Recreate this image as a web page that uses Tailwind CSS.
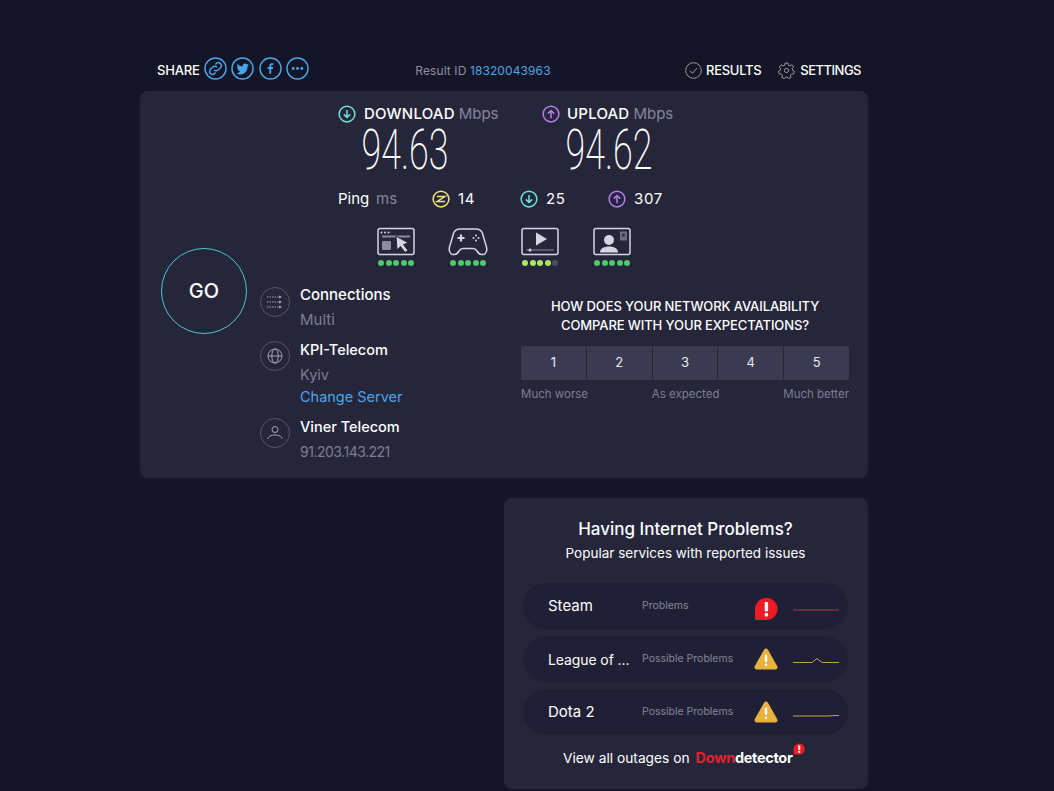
<!DOCTYPE html>
<html lang="en">
<head>
    <meta charset="UTF-8">
    <title>Speedtest Result</title>
    <script src="https://cdn.jsdelivr.net/npm/@tailwindcss/browser@4"></script>
</head>
<body class="bg-[#141526] h-[791px] overflow-hidden font-['Inter',sans-serif] text-white">
    <div class="w-[728px] ml-[140px] pt-[50px]">
        <!-- top bar -->
        <div class="h-[41px] flex items-center justify-between pl-[17px] pr-[7px]">
            <div class="flex items-center w-[208px]">
                <span class="text-[13px] font-medium tracking-[-0.2px] mr-[4px]">SHARE</span>
                <div class="flex gap-[4.500px] text-[#4aa5e8] -mt-[5px]">
                    <svg class="w-[23px] h-[23px]" viewBox="0 0 24 24" fill="none" stroke="currentColor" stroke-width="1.500"><circle cx="12" cy="12" r="11"/><path d="M10.500 13.500a3 3 0 0 0 4.300 0l2.400-2.400a3 3 0 0 0-4.300-4.300l-1 1M13.500 10.500a3 3 0 0 0-4.300 0l-2.400 2.400a3 3 0 0 0 4.300 4.300l1-1"/></svg>
                    <svg class="w-[23px] h-[23px]" viewBox="0 0 24 24" fill="none" stroke="currentColor" stroke-width="1.500"><circle cx="12" cy="12" r="11"/><path fill="currentColor" stroke="none" d="M18.500 8a5 5 0 0 1-1.500.4 2.600 2.600 0 0 0 1.100-1.400 5 5 0 0 1-1.600.6 2.600 2.600 0 0 0-4.400 2.300A7.300 7.300 0 0 1 6.700 7.300a2.600 2.600 0 0 0 .8 3.400 2.600 2.600 0 0 1-1.200-.3c0 1.300.9 2.400 2.100 2.600a2.600 2.600 0 0 1-1.200 0c.3 1 1.300 1.800 2.400 1.800A5.200 5.200 0 0 1 5.800 16.900a7.300 7.300 0 0 0 11.300-6.500A5 5 0 0 0 18.500 8z"/></svg>
                    <svg class="w-[23px] h-[23px]" viewBox="0 0 24 24" fill="none" stroke="currentColor" stroke-width="1.500"><circle cx="12" cy="12" r="11"/><path fill="currentColor" stroke="none" d="M12.800 17.500v-5h1.700l.3-2h-2V9.300c0-.6.200-1 1-1h1V6.600c-.2 0-.8-.1-1.500-.1-1.500 0-2.500.9-2.500 2.600v1.400H9v2h1.800v5z"/></svg>
                    <svg class="w-[23px] h-[23px]" viewBox="0 0 24 24" fill="none" stroke="currentColor" stroke-width="1.500"><circle cx="12" cy="12" r="11"/><g fill="currentColor" stroke="none"><circle cx="7.500" cy="12" r="1.500"/><circle cx="12" cy="12" r="1.500"/><circle cx="16.500" cy="12" r="1.500"/></g></svg>
                </div>
            </div>
            <div class="text-[12px] text-[#8d8ea3] tracking-[0.1px]">Result ID <span class="text-[#4aa5e8]">18320043963</span></div>
            <div class="w-[260px] flex items-center justify-end">
                <svg class="w-[17px] h-[17px] mr-[4px] text-[#a3a4b4]" viewBox="0 0 24 24" fill="none" stroke="currentColor" stroke-width="1.300"><circle cx="12" cy="12" r="11"/><path d="M7 12.500l3.500 3.500 6.500-7.500"/></svg>
                <span class="text-[13px] font-medium tracking-[-0.3px]">RESULTS</span>
                <svg class="w-[17px] h-[17px] ml-[17px] mr-[5px] text-[#a3a4b4]" viewBox="0 0 24 24" fill="none" stroke="currentColor" stroke-width="1.300"><circle cx="12" cy="12" r="3"/><path d="M10 1.500h4l.6 3 2.300 1 2.700-1.600 2.500 3.100-2 2.200.4 2.500 2.500 1.300-.9 3.800-3 .1-1.500 2 .8 3-3.600 1.700-1.800-2.400h-2.200l-1.800 2.400-3.600-1.700.8-3-1.500-2-3-.1-.9-3.800 2.500-1.300.4-2.500-2-2.200L4.400 3.900l2.700 1.600 2.300-1z"/></svg>
                <span class="text-[13px] font-medium tracking-[-0.5px]">SETTINGS</span>
            </div>
        </div>

        <!-- result card -->
        <div class="h-[387px] bg-[#25263a] rounded-[8px] pl-[21px] flex">
            <div class="w-[86px] mr-[13px] pt-[157px] shrink-0">
                <div class="w-[86px] h-[86px] rounded-full border border-[#4fc5d5] flex items-center justify-center text-[20px] font-medium">GO</div>
            </div>
            <div class="flex-1">
                <!-- speeds -->
                <div class="flex ml-[78px] pt-[14px]">
                    <div class="w-[204px]">
                        <div class="flex items-center h-[18px]">
                            <svg class="w-[18px] h-[18px] mr-[8px] text-[#6ee2d8]" viewBox="0 0 24 24" fill="none" stroke="currentColor" stroke-width="2"><circle cx="12" cy="12" r="10.500"/><path d="M12 6.500v10M7.800 12.500l4.200 4.200 4.200-4.200"/></svg>
                            <span class="text-[15px] font-medium tracking-[0.2px]">DOWNLOAD</span>
                            <span class="text-[15px] text-[#85869b] ml-[4px]">Mbps</span>
                        </div>
                        <div class="h-[51px] w-[133px] flex justify-center">
                            <span class="font-['Roboto',sans-serif] font-extralight text-[56px] leading-[54px] scale-x-[0.64] origin-center">94.63</span>
                        </div>
                    </div>
                    <div>
                        <div class="flex items-center h-[18px]">
                            <svg class="w-[18px] h-[18px] mr-[7px] text-[#b67df0]" viewBox="0 0 24 24" fill="none" stroke="currentColor" stroke-width="2"><circle cx="12" cy="12" r="10.500"/><path d="M12 17.500v-10M7.800 11.500l4.200-4.200 4.200 4.200"/></svg>
                            <span class="text-[15px] font-medium tracking-[0.2px]">UPLOAD</span>
                            <span class="text-[15px] text-[#85869b] ml-[4px]">Mbps</span>
                        </div>
                        <div class="h-[51px] w-[133px] flex justify-center">
                            <span class="font-['Roboto',sans-serif] font-extralight text-[56px] leading-[54px] scale-x-[0.64] origin-center">94.62</span>
                        </div>
                    </div>
                </div>
                <!-- ping -->
                <div class="flex items-center ml-[78px] mt-[15px] h-[20px] text-[15px]">
                    <span class="w-[38px]">Ping</span>
                    <span class="w-[56px] text-[#85869b]">ms</span>
                    <svg class="w-[18px] h-[18px] text-[#f3e67b]" viewBox="0 0 24 24" fill="none" stroke="currentColor" stroke-width="2"><circle cx="12" cy="12" r="10.500"/><path d="M6.500 8.800h10.500L7 15.200h10.500"/></svg>
                    <span class="w-[62px] ml-[8px] tracking-[0.7px]">14</span>
                    <svg class="w-[18px] h-[18px] text-[#6ee2d8]" viewBox="0 0 24 24" fill="none" stroke="currentColor" stroke-width="2"><circle cx="12" cy="12" r="10.500"/><path d="M12 6.500v10M7.800 12.500l4.200 4.200 4.200-4.200"/></svg>
                    <span class="w-[62px] ml-[8px] tracking-[0.7px]">25</span>
                    <svg class="w-[18px] h-[18px] text-[#b67df0]" viewBox="0 0 24 24" fill="none" stroke="currentColor" stroke-width="2"><circle cx="12" cy="12" r="10.500"/><path d="M12 17.500v-10M7.800 11.500l4.200-4.200 4.200 4.200"/></svg>
                    <span class="ml-[8px] tracking-[0.7px]">307</span>
                </div>
                <!-- quality icons -->
                <div class="flex ml-[117px] mt-[18px] gap-[34px] text-[#d5d5e3]">
                    <div class="w-[38px] flex flex-col items-center">
                        <svg class="w-[38px] h-[30px]" viewBox="0 0 38 30" fill="none" stroke="currentColor" stroke-width="1.500"><rect x="1" y="1.500" width="36" height="26" rx="2"/><path d="M5 9.500h28" stroke-width="2" stroke="#8b8c9e"/><circle cx="4.500" cy="5.500" r="1" fill="currentColor" stroke="none"/><circle cx="8" cy="5.500" r="1" fill="currentColor" stroke="none"/><circle cx="11.500" cy="5.500" r="1" fill="currentColor" stroke="none"/><rect x="5" y="14" width="9" height="9" rx="1" fill="#8b8c9e" stroke="none"/><path d="M19 9l12.500 7-5 1.500 4.500 6-3 2-4.500-6-3.500 3.500z" fill="currentColor" stroke="#25263a" stroke-width="1"/></svg>
                        <div class="flex gap-[1.500px] mt-[3px]"><i class="w-[6px] h-[6px] rounded-full bg-[#4ec96b]"></i><i class="w-[6px] h-[6px] rounded-full bg-[#4ec96b]"></i><i class="w-[6px] h-[6px] rounded-full bg-[#4ec96b]"></i><i class="w-[6px] h-[6px] rounded-full bg-[#4ec96b]"></i><i class="w-[6px] h-[6px] rounded-full bg-[#4ec96b]"></i></div>
                    </div>
                    <div class="w-[38px] flex flex-col items-center">
                        <svg class="w-[40px] h-[30px]" viewBox="0 0 40 30" fill="none" stroke="currentColor" stroke-width="1.500"><path d="M12 2h16c3.500 0 5.500 1.500 6.500 4.500L38.500 20c1 4-1 7.500-3.500 7.500h-1.500c-2 0-3-1-4.500-3.500-1-1.500-2-2.500-4-2.500H15c-2 0-3 1-4 2.500-1.500 2.500-2.500 3.500-4.500 3.500H5c-2.500 0-4.500-3.500-3.500-7.500L5.500 6.500C6.500 3.500 8.500 2 12 2z"/><path d="M9.500 11h7M13 7.500v7" stroke-width="2.200"/><g fill="currentColor" stroke="none"><circle cx="28" cy="8.500" r="1"/><circle cx="28" cy="13.500" r="1"/><circle cx="25.500" cy="11" r="1"/><circle cx="30.500" cy="11" r="1"/></g></svg>
                        <div class="flex gap-[1.500px] mt-[3px]"><i class="w-[6px] h-[6px] rounded-full bg-[#4ec96b]"></i><i class="w-[6px] h-[6px] rounded-full bg-[#4ec96b]"></i><i class="w-[6px] h-[6px] rounded-full bg-[#4ec96b]"></i><i class="w-[6px] h-[6px] rounded-full bg-[#4ec96b]"></i><i class="w-[6px] h-[6px] rounded-full bg-[#4ec96b]"></i></div>
                    </div>
                    <div class="w-[38px] flex flex-col items-center">
                        <svg class="w-[38px] h-[30px]" viewBox="0 0 38 30" fill="none" stroke="currentColor" stroke-width="1.500"><rect x="1" y="1.500" width="36" height="26" rx="2"/><path d="M15 5.500l11 6.500-11 6.500z" fill="currentColor" stroke="none"/><path d="M5 23h28" stroke-width="1" stroke="#8b8c9e"/><circle cx="9" cy="23" r="1.500" fill="currentColor" stroke="none"/></svg>
                        <div class="flex gap-[1.500px] mt-[3px]"><i class="w-[6px] h-[6px] rounded-full bg-[#a5ea63]"></i><i class="w-[6px] h-[6px] rounded-full bg-[#a5ea63]"></i><i class="w-[6px] h-[6px] rounded-full bg-[#a5ea63]"></i><i class="w-[6px] h-[6px] rounded-full bg-[#a5ea63]"></i><i class="w-[6px] h-[6px] rounded-full bg-[#4c4d60]"></i></div>
                    </div>
                    <div class="w-[38px] flex flex-col items-center">
                        <svg class="w-[38px] h-[30px]" viewBox="0 0 38 30" fill="none" stroke="currentColor" stroke-width="1.500"><rect x="1" y="1.500" width="36" height="26" rx="2"/><circle cx="16" cy="13" r="5" fill="currentColor" stroke="none"/><path d="M7 25.500c0-4 4-6 9-6s9 2 9 6z" fill="currentColor" stroke="none"/><rect x="27" y="4.500" width="7" height="9" fill="#6a6b7d" stroke="none"/><circle cx="30.500" cy="8" r="1.500" fill="#25263a" stroke="none"/></svg>
                        <div class="flex gap-[1.500px] mt-[3px]"><i class="w-[6px] h-[6px] rounded-full bg-[#4ec96b]"></i><i class="w-[6px] h-[6px] rounded-full bg-[#4ec96b]"></i><i class="w-[6px] h-[6px] rounded-full bg-[#4ec96b]"></i><i class="w-[6px] h-[6px] rounded-full bg-[#4ec96b]"></i><i class="w-[6px] h-[6px] rounded-full bg-[#4ec96b]"></i></div>
                    </div>
                </div>
                <!-- details + survey -->
                <div class="flex mt-[19px]">
                    <div class="w-[261px] shrink-0">
                        <div class="flex gap-[10px] h-[55px]">
                            <div class="w-[30px] h-[30px] mt-[2px] rounded-full border border-[#55566a] flex items-center justify-center text-[#a3a4b4]">
                                <svg class="w-[18px] h-[18px]" viewBox="0 0 18 18" fill="none" stroke="currentColor" stroke-width="1" stroke-dasharray="1.500 1"><path d="M1 4h14M1 9h14M1 14h14"/><path d="M13 2.500L16 4l-3 1.500zM13 7.500L16 9l-3 1.500zM13 12.500L16 14l-3 1.500z" fill="currentColor" stroke="none"/></svg>
                            </div>
                            <div>
                                <div class="text-[15px] leading-[20px] font-medium">Connections</div>
                                <div class="text-[15px] leading-[20px] mt-[5px] text-[#7d7e93]">Multi</div>
                            </div>
                        </div>
                        <div class="flex gap-[10px] h-[77px]">
                            <div class="w-[30px] h-[30px] mt-[1px] rounded-full border border-[#55566a] flex items-center justify-center text-[#a3a4b4]">
                                <svg class="w-[16px] h-[16px]" viewBox="0 0 16 16" fill="none" stroke="currentColor" stroke-width="1"><circle cx="8" cy="8" r="7"/><ellipse cx="8" cy="8" rx="3.200" ry="7"/><path d="M1 8h14"/></svg>
                            </div>
                            <div>
                                <div class="text-[14.500px] leading-[20px] font-medium">KPI-Telecom</div>
                                <div class="text-[14.500px] leading-[20px] mt-[5px] text-[#7d7e93]">Kyiv</div>
                                <div class="text-[14.500px] leading-[20px] mt-[2px] text-[#4aa5e8]">Change Server</div>
                            </div>
                        </div>
                        <div class="flex gap-[10px]">
                            <div class="w-[30px] h-[30px] mt-[1px] rounded-full border border-[#55566a] flex items-center justify-center text-[#a3a4b4]">
                                <svg class="w-[16px] h-[16px]" viewBox="0 0 16 16" fill="none" stroke="currentColor" stroke-width="1"><circle cx="8" cy="4.500" r="3"/><path d="M1 14c0-2.500 3-4 7-4s7 1.500 7 4"/></svg>
                            </div>
                            <div>
                                <div class="text-[14.500px] leading-[20px] font-medium">Viner Telecom</div>
                                <div class="text-[14px] leading-[20px] mt-[5px] text-[#7d7e93] tracking-[-0.5px]">91.203.143.221</div>
                            </div>
                        </div>
                    </div>
                    <div class="w-[328px] pt-[12px]">
                        <div class="text-center text-[13px] leading-[19px] font-medium tracking-[-0.1px]">HOW DOES YOUR NETWORK AVAILABILITY<br>COMPARE WITH YOUR EXPECTATIONS?</div>
                        <div class="flex gap-[1px] mt-[11px] h-[34px] rounded-[2px] overflow-hidden text-[13px] text-[#e8e8f0]">
                            <div class="flex-1 bg-[#3a3b50] flex items-center justify-center">1</div>
                            <div class="flex-1 bg-[#3a3b50] flex items-center justify-center">2</div>
                            <div class="flex-1 bg-[#3a3b50] flex items-center justify-center">3</div>
                            <div class="flex-1 bg-[#3a3b50] flex items-center justify-center">4</div>
                            <div class="flex-1 bg-[#3a3b50] flex items-center justify-center">5</div>
                        </div>
                        <div class="flex justify-between mt-[6px] text-[11.500px] leading-[16px] text-[#7d7e93]">
                            <span>Much worse</span><span>As expected</span><span>Much better</span>
                        </div>
                    </div>
                </div>
            </div>
        </div>

        <!-- problems card -->
        <div class="w-[364px] h-[291px] ml-auto mt-[20px] bg-[#25263a] rounded-[8px] pl-[19px] pr-[20px] pt-[21px]">
            <div class="text-center text-[17px] leading-[21px] font-medium">Having Internet Problems?</div>
            <div class="text-center text-[13.500px] leading-[20px] mt-[3px]">Popular services with reported issues</div>
            <div class="flex flex-col gap-[7px] mt-[20px]">
                <div class="h-[46px] rounded-[23px] bg-[#1f2035] flex items-center pl-[25px]">
                    <span class="w-[94px] text-[15px] pt-[1px]">Steam</span>
                    <span class="w-[112px] text-[10.500px] text-[#85869b]">Problems</span>
                    <svg class="w-[24px] h-[24px] mt-[5px]" viewBox="0 0 24 24"><path d="M12.500 1a11 11 0 0 1 0 22L1 23V12.500A11.500 11.500 0 0 1 12.500 1z" fill="#ee1b24"/><rect x="10.700" y="5" width="3.400" height="9.500" rx="1" fill="#fff"/><rect x="10.700" y="16" width="3.400" height="3.400" rx="1" fill="#fff"/></svg>
                    <svg class="w-[46px] h-[10px] ml-[15px]" viewBox="0 0 46 10" fill="none" stroke="#a83a52" stroke-width="1"><path d="M0 9h46"/></svg>
                </div>
                <div class="h-[46px] rounded-[23px] bg-[#1f2035] flex items-center pl-[25px]">
                    <span class="w-[94px] text-[14px] tracking-[-0.1px]">League of ...</span>
                    <span class="w-[112px] text-[10.500px] text-[#85869b]">Possible Problems</span>
                    <svg class="w-[24px] h-[24px]" viewBox="0 0 24 24"><path d="M12 1.500c.8 0 1.500.4 2 1.200l9.300 16.500c.7 1.400-.1 3.300-1.900 3.300H2.600c-1.800 0-2.600-1.900-1.900-3.300L10 2.700c.5-.8 1.200-1.200 2-1.200z" fill="#e9b23c"/><rect x="10.800" y="7.500" width="2.400" height="7.500" rx="1" fill="#fff"/><rect x="10.800" y="16.500" width="2.400" height="2.500" rx="1" fill="#fff"/></svg>
                    <svg class="w-[46px] h-[10px] ml-[15px]" viewBox="0 0 46 10" fill="none" stroke="#c4a14e" stroke-width="1"><path d="M0 8.500h19l5-4 5 4h17"/></svg>
                </div>
                <div class="h-[46px] rounded-[23px] bg-[#1f2035] flex items-center pl-[25px]">
                    <span class="w-[94px] text-[15px] pt-[1px]">Dota 2</span>
                    <span class="w-[112px] text-[10.500px] text-[#85869b]">Possible Problems</span>
                    <svg class="w-[24px] h-[24px]" viewBox="0 0 24 24"><path d="M12 1.500c.8 0 1.500.4 2 1.200l9.300 16.500c.7 1.400-.1 3.300-1.900 3.300H2.600c-1.800 0-2.600-1.900-1.900-3.300L10 2.700c.5-.8 1.200-1.200 2-1.200z" fill="#e9b23c"/><rect x="10.800" y="7.500" width="2.400" height="7.500" rx="1" fill="#fff"/><rect x="10.800" y="16.500" width="2.400" height="2.500" rx="1" fill="#fff"/></svg>
                    <svg class="w-[46px] h-[10px] ml-[15px]" viewBox="0 0 46 10" fill="none" stroke="#c4a14e" stroke-width="1"><path d="M0 9h34l8-.5h4"/></svg>
                </div>
            </div>
            <div class="flex items-center pl-[40px] mt-[12px] h-[22px]">
                <span class="text-[13.750px] mr-[6px]">View all outages on</span>
                <span class="relative text-[14.500px] font-bold tracking-[-0.3px] -mt-[1px]"><span class="text-[#e8222c]">Down</span>detector
                    <svg class="absolute -top-[4px] -right-[12px] w-[12px] h-[12px]" viewBox="0 0 24 24"><path d="M12.500 1a11 11 0 0 1 0 22L1 23V12.500A11.500 11.500 0 0 1 12.500 1z" fill="#ee1b24"/><rect x="10.500" y="5" width="4" height="9.500" rx="1" fill="#fff"/><rect x="10.500" y="16" width="4" height="3.500" rx="1" fill="#fff"/></svg>
                </span>
            </div>
        </div>
    </div>
</body>
</html>
